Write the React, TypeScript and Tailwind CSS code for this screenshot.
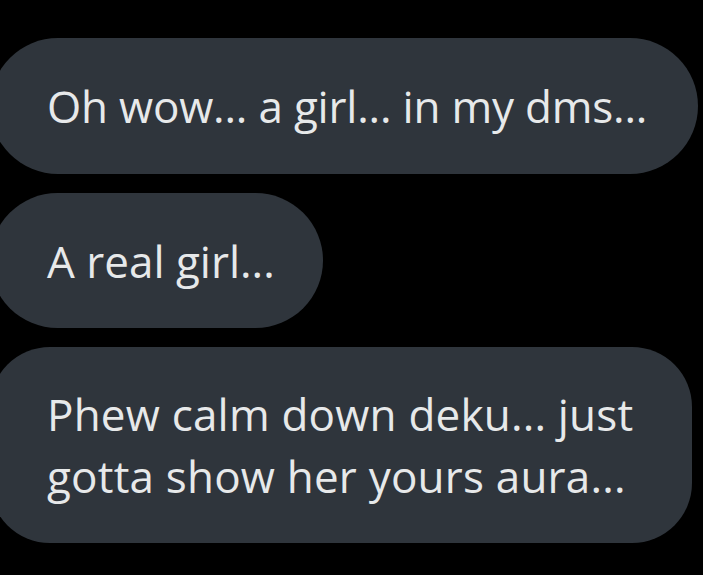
export default function App() {
  return (
    <div
      className="w-[703px] h-[575px] bg-black overflow-hidden pt-[38px]"
      style={{ fontFamily: '"Open Sans", "Noto Sans", sans-serif' }}
    >
      <div className="flex flex-col items-start gap-[19px] ml-[-10px]">
        <div className="w-[708px] h-[136px] rounded-full bg-[#2f353c] pl-[57px] flex items-center">
          <p className="text-[#e7e9ea] text-[44px] leading-[62px] tracking-[-0.2px]">Oh wow... a girl... in my dms...</p>
        </div>
        <div className="w-[333px] h-[135px] rounded-full bg-[#2f353c] pl-[57px] flex items-center">
          <p className="text-[#e7e9ea] text-[44px] leading-[62px]">A real girl...</p>
        </div>
        <div className="w-[702px] h-[196px] rounded-[60px] bg-[#2f353c] pl-[57px] pr-[40px] flex items-center">
          <p className="text-[#e7e9ea] text-[44px] leading-[62px] tracking-[0.2px]">
            Phew calm down deku... just
            <br />
            gotta show her yours aura...
          </p>
        </div>
      </div>
    </div>
  );
}
